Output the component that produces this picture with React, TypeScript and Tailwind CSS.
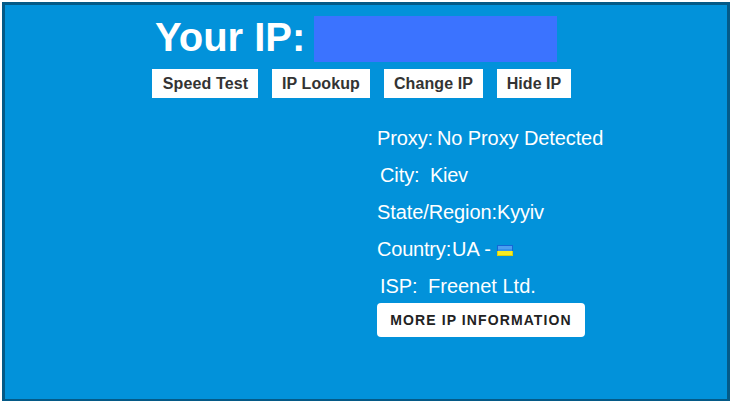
const actions = [
  { label: 'Speed Test', box: 'w-[106px] pl-px', text: 'tracking-[0.15px]' },
  { label: 'IP Lookup', box: 'w-[98px]', text: 'tracking-[0.1px]' },
  { label: 'Change IP', box: 'w-[99px]', text: 'tracking-[0.1px]' },
  { label: 'Hide IP', box: 'w-[74px]', text: 'tracking-[0.05px]' },
];

const details = [
  { label: 'Proxy:', value: 'No Proxy Detected', labelClass: 'w-[60px] tracking-[-0.1px]', valueClass: 'tracking-[-0.1px]' },
  { label: 'City:', value: 'Kiev', labelClass: 'w-[53px] pl-[3px] tracking-[-0.1px]', valueClass: 'tracking-[-0.3px]' },
  { label: 'State/Region:', value: 'Kyyiv', labelClass: 'w-[120px] tracking-[-0.1px]', valueClass: 'tracking-[-0.2px]' },
  { label: 'Country:', value: 'UA -', labelClass: 'w-[75px] tracking-[-0.2px]', valueClass: '', flag: true },
  { label: 'ISP:', value: 'Freenet Ltd.', labelClass: 'w-[51px] pl-[3px] tracking-[-0.1px]', valueClass: '' },
];

function Flag() {
  return (
    <svg className="mt-[3px] ml-[6px] h-[11px] w-4" viewBox="0 0 16 11" shapeRendering="crispEdges">
      <rect width="16" height="6" fill="#1467d6" />
      <rect x="1" y="1" width="14" height="3" fill="#4d9ff0" />
      <rect x="1" y="4" width="14" height="2" fill="#3590ea" />
      <rect y="6" width="16" height="5" fill="#d8d010" />
      <rect x="1" y="6" width="14" height="4" fill="#f6ec22" />
    </svg>
  );
}

export default function App() {
  return (
    <div className="h-[401px] w-[731px] overflow-hidden bg-white pt-[2px] pl-[2px] font-['Liberation_Sans',Arial,sans-serif]">
      <main className="h-[400px] w-[728px] border-[3px] border-[#045a87] bg-[#0292da] pt-[11px]">
        <div className="flex h-[46px] pl-[150px]">
          <h1 className="w-[159px] text-[40px] leading-[42px] font-bold whitespace-nowrap text-white">Your IP:</h1>
          <div className="h-[46px] w-[243px] bg-[#3b73ff]" />
        </div>
        <nav className="mt-[7px] flex gap-[14px] pl-[147px]">
          {actions.map((a) => (
            <button key={a.label} className={`flex h-[29px] items-center justify-center bg-white text-base font-bold whitespace-nowrap text-[#333] ${a.box} ${a.text}`}>
              {a.label}
            </button>
          ))}
        </nav>
        <section className="mt-[21px] pl-[372px] text-[20px] text-white">
          {details.map((d) => (
            <div key={d.label} className="flex h-[37px] items-center whitespace-nowrap">
              <span className={d.labelClass}>{d.label}</span>
              <span className={d.valueClass}>{d.value}</span>
              {d.flag && <Flag />}
            </div>
          ))}
          <button className="-mt-px flex h-[34px] w-[208px] items-center justify-center rounded-[4px] bg-white text-[14px] font-bold tracking-[1.1px] whitespace-nowrap text-[#222]">
            MORE IP INFORMATION
          </button>
        </section>
      </main>
    </div>
  );
}
